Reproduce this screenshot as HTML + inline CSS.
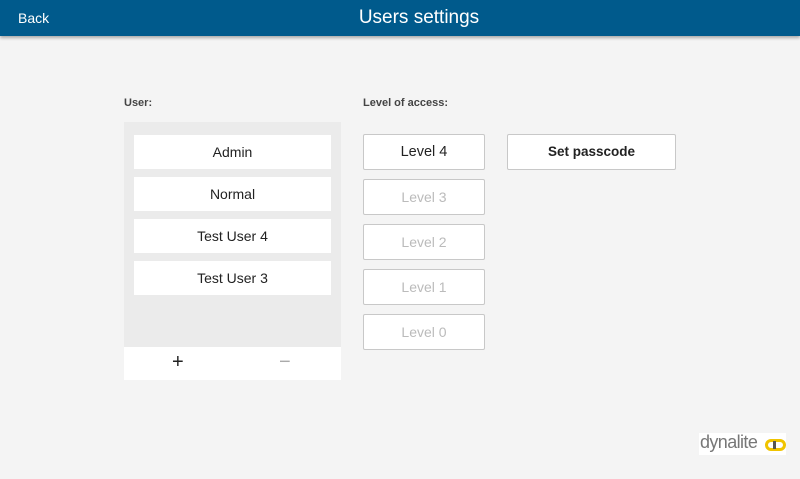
<!DOCTYPE html>
<html><head><style>
*{margin:0;padding:0;box-sizing:border-box}
body{width:800px;height:479px;background:#f4f4f4;font-family:"Liberation Sans",sans-serif;position:relative;overflow:hidden}
.hdr{position:absolute;left:0;top:0;width:800px;height:36px;background:#005a8c;box-shadow:0 2px 3px rgba(0,0,0,.3);color:#fff}
.back{position:absolute;left:18px;top:10px;font-size:14px}
.title{position:absolute;left:0;width:838px;text-align:center;top:7px;font-size:19px}
.lbl{position:absolute;font-size:11px;color:#444;font-weight:bold}
.panel{position:absolute;left:124px;top:122px;width:217px;height:225px;background:#ebebeb}
.u{position:absolute;left:134px;width:197px;height:34px;background:#fff;font-size:14px;color:#222;text-align:center;line-height:34px}
.bar{position:absolute;left:124px;top:347px;width:217px;height:33px;background:#fff}
.b{position:absolute;left:363px;width:122px;height:36px;border:1px solid #c8c8c8;background:#fff;border-radius:2px;text-align:center;line-height:34px;font-size:14px;color:#bbb}
</style></head><body>
<div class="hdr"><div class="back">Back</div><div class="title">Users settings</div></div>
<div class="lbl" style="left:124px;top:97px">User:</div>
<div class="lbl" style="left:363px;top:97px">Level of access:</div>
<div class="panel"></div>
<div class="u" style="top:135px">Admin</div>
<div class="u" style="top:177px">Normal</div>
<div class="u" style="top:219px">Test User 4</div>
<div class="u" style="top:261px">Test User 3</div>
<div class="bar"><span style="position:absolute;left:48px;top:4px;font-size:20px;color:#222">+</span><span style="position:absolute;left:155px;top:4px;font-size:20px;color:#aaa">−</span></div>
<div class="b" style="top:134px;color:#222;font-size:14.5px">Level 4</div>
<div class="b" style="top:179px">Level 3</div>
<div class="b" style="top:224px">Level 2</div>
<div class="b" style="top:269px">Level 1</div>
<div class="b" style="top:314px">Level 0</div>
<div class="b" style="top:134px;left:507px;width:169px;color:#222;font-weight:bold;font-size:13.5px">Set passcode</div>
<div style="position:absolute;left:699px;top:433px;width:87px;height:22px;background:#fff"></div>
<div style="position:absolute;left:700px;top:432px;font-size:18px;color:#777;letter-spacing:-0.6px">dynalite</div>
<div style="position:absolute;left:765px;top:439px;width:21px;height:12px;border-radius:6px;border:3px solid #f0c400"></div>
<div style="position:absolute;left:773px;top:441px;width:3px;height:8px;background:#555"></div>
</body></html>
